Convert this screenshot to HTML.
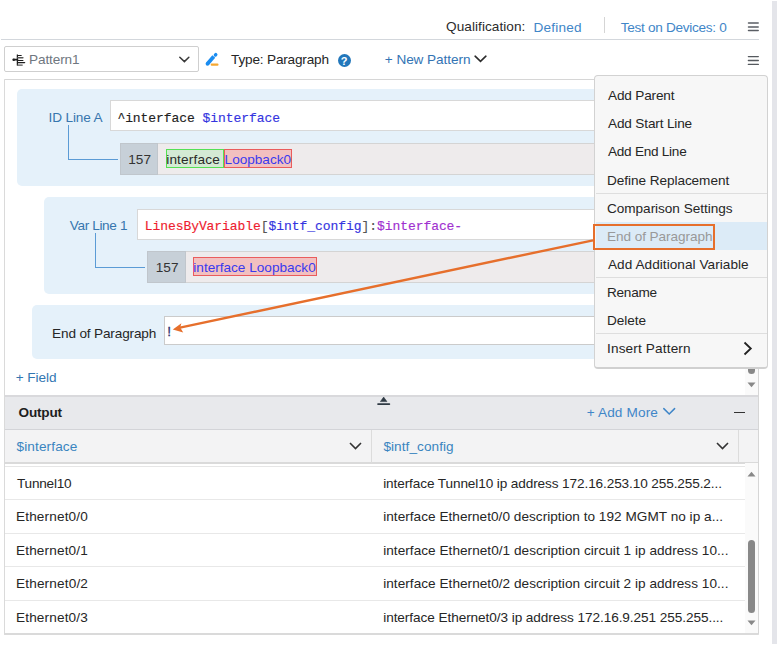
<!DOCTYPE html>
<html><head><meta charset="utf-8">
<style>
*{margin:0;padding:0;box-sizing:border-box}
html,body{width:781px;height:646px;overflow:hidden;background:#fff}
body{position:relative;font-family:"Liberation Sans",sans-serif;font-size:13.6px;color:#262626}
.a{position:absolute}
.t{position:absolute;white-space:nowrap;line-height:16px;font-size:13.6px}
.m{position:absolute;white-space:nowrap;line-height:16px;font-family:"Liberation Mono",monospace;font-size:13px;letter-spacing:-0.06px;-webkit-text-stroke:0.15px currentColor}
</style></head><body>

<!-- right strip -->
<div class="a" style="left:772px;top:1px;width:5px;height:643px;background:#e4e5ea"></div>

<!-- top row -->
<div class="a" style="left:604px;top:17px;width:1px;height:16px;background:#d5d5d5"></div>
<svg class="a" style="left:746px;top:20px" width="15" height="14" viewBox="0 0 15 14"><g stroke="#5a5e64" stroke-width="1.5" stroke-linecap="round"><line x1="2.5" y1="3" x2="12.2" y2="3"/><line x1="2.5" y1="6.9" x2="12.2" y2="6.9"/><line x1="2.5" y1="10.5" x2="12.2" y2="10.5"/></g></svg>
<div class="a" style="left:1px;top:39px;width:758px;height:1px;background:#d3d7dc"></div>

<!-- pattern dropdown -->
<div class="a" style="left:4px;top:46px;width:195px;height:26px;border:1px solid #cfcfcf;border-radius:2px"></div>
<svg class="a" style="left:10px;top:52px" width="18" height="16" viewBox="0 0 18 16">
 <g stroke="#1f1f1f" fill="none" stroke-linecap="round">
  <circle cx="3.7" cy="7.7" r="1.3" fill="#1f1f1f" stroke="none"/>
  <line x1="3.7" y1="7.7" x2="7.4" y2="7.7" stroke-width="1.7"/>
  <line x1="7.4" y1="2.5" x2="7.4" y2="13.5" stroke-width="1.3" stroke-linecap="butt"/>
  <line x1="7.6" y1="3.5" x2="11.2" y2="3.5" stroke-width="1.2"/>
  <line x1="7.6" y1="5.8" x2="12.9" y2="5.8" stroke-width="1.4" stroke="#555"/>
  <line x1="7.6" y1="8.5" x2="12.9" y2="8.5" stroke-width="1.2"/>
  <line x1="7.6" y1="10.6" x2="14.6" y2="10.6" stroke-width="1.4"/>
  <line x1="7.6" y1="13.1" x2="12.2" y2="13.1" stroke-width="1.4" stroke="#555"/>
 </g>
</svg>
<svg class="a" style="left:178px;top:56px" width="12" height="8" viewBox="0 0 12 8"><polyline points="1.8,1.2 6.4,5.65 10.85,1.2" fill="none" stroke="#3a3a3a" stroke-width="1.5" stroke-linecap="round"/></svg>

<!-- pencil -->
<svg class="a" style="left:200px;top:48px" width="24" height="22" viewBox="0 0 24 22">
 <line x1="7.5" y1="15.8" x2="13.8" y2="8.6" stroke="#1a8cf0" stroke-width="3.8" stroke-linecap="butt"/>
 <circle cx="7.5" cy="15.8" r="1.9" fill="#1a8cf0"/>
 <line x1="15.4" y1="7.0" x2="15.8" y2="6.6" stroke="#1a8cf0" stroke-width="3.4" stroke-linecap="round"/>
 <rect x="10.7" y="15.6" width="7.8" height="2.1" rx="1" fill="#f5a833"/>
</svg>
<div class="a" style="left:337.7px;top:54.4px;width:13px;height:13px;border-radius:50%;background:#2277bb"></div>
<div class="t" style="left:337.7px;top:53px;width:13px;text-align:center;color:#fff;font-weight:bold;font-size:11px">?</div>
<svg class="a" style="left:473px;top:55px" width="15" height="9" viewBox="0 0 15 9"><polyline points="2.1,1.2 7.5,6.3 12.9,1.2" fill="none" stroke="#2b2b2b" stroke-width="1.6" stroke-linecap="round"/></svg>
<svg class="a" style="left:746px;top:53px" width="15" height="14" viewBox="0 0 15 14"><g stroke="#55595e" stroke-width="1.4" stroke-linecap="round"><line x1="2.4" y1="3.6" x2="12.3" y2="3.6"/><line x1="2.4" y1="7.5" x2="12.3" y2="7.5"/><line x1="2.4" y1="11.4" x2="12.3" y2="11.4"/></g></svg>

<!-- container -->
<div class="a" style="left:4px;top:78.5px;width:755px;height:556.5px;border:1px solid #d6d6d6;border-left:1.5px solid #dadada;border-bottom:2px solid #dadada;border-radius:1px"></div>

<!-- panel 1 -->
<div class="a" style="left:17px;top:89px;width:728px;height:97px;background:#e5f1fa;border-radius:5px"></div>
<div class="a" style="left:110px;top:100.2px;width:625px;height:31px;background:#fff;border:1px solid #d8d8d8"></div>
<div class="m" style="left:117.4px;top:111px;color:#222">^interface <span style="color:#3434e0">$interface</span></div>
<div class="a" style="left:68px;top:125px;width:1px;height:34px;background:#5b9bd5"></div>
<div class="a" style="left:68px;top:158.5px;width:50px;height:1px;background:#5b9bd5"></div>
<div class="a" style="left:120px;top:143.3px;width:615px;height:31.5px;background:#eeebec;border:1px solid #d4d4d4"></div>
<div class="a" style="left:120px;top:143.3px;width:38px;height:31.5px;background:#c7d0d8;border:1px solid #c0c6cc"></div>
<div class="a" style="left:166px;top:149.2px;width:58px;height:19.2px;background:#d4ead4;border:1.5px solid #55e055"></div>
<div class="a" style="left:224px;top:149.2px;width:68px;height:19.2px;background:#f2c0c0;border:1.5px solid #ea5c5c"></div>

<!-- panel 2 -->
<div class="a" style="left:43.5px;top:197px;width:702px;height:97.3px;background:#e5f1fa;border-radius:5px"></div>
<div class="a" style="left:137.3px;top:208.5px;width:600px;height:31px;background:#fff;border:1px solid #d8d8d8"></div>
<div class="m" style="left:144.7px;top:219px;color:#555"><span style="color:#ee1c2e">LinesByVariable</span>[<span style="color:#3434e0">$intf_config</span>]:<span style="color:#a030d0">$interface-</span></div>
<div class="a" style="left:95.3px;top:233px;width:1px;height:34px;background:#5b9bd5"></div>
<div class="a" style="left:95.3px;top:266.8px;width:50px;height:1px;background:#5b9bd5"></div>
<div class="a" style="left:147.2px;top:251.4px;width:590px;height:31.2px;background:#eeebec;border:1px solid #d4d4d4"></div>
<div class="a" style="left:147.2px;top:251.4px;width:38.4px;height:31.2px;background:#c7d0d8;border:1px solid #c0c6cc"></div>
<div class="a" style="left:192.8px;top:257.2px;width:124px;height:18.8px;background:#f2c0c0;border:1.5px solid #ea5c5c"></div>

<!-- panel 3 -->
<div class="a" style="left:32.3px;top:305.2px;width:713px;height:53.5px;background:#e5f1fa;border-radius:5px"></div>
<div class="a" style="left:164.3px;top:316.3px;width:575px;height:28.6px;background:#fff;border:1px solid #cbcbcb"></div>
<div class="t" style="left:167.3px;top:324px;color:#2e3470;-webkit-text-stroke:0.3px #2e3470">!</div>

<!-- field scrollbar -->
<div class="a" style="left:745px;top:79px;width:13px;height:316px;background:#fafafa"></div>
<div class="a" style="left:747.7px;top:330px;width:7.8px;height:44.2px;background:#888;border-radius:4px"></div>
<svg class="a" style="left:747px;top:381.5px" width="9" height="6" viewBox="0 0 9 6"><polygon points="0.5,0.5 8.5,0.5 4.5,5.2" fill="#888"/></svg>

<!-- output header -->
<div class="a" style="left:5px;top:395px;width:753px;height:35px;background:#e8e9ec;border-top:2px solid #d9d9dc;border-bottom:1px solid #d3d4d8"></div>
<svg class="a" style="left:377px;top:396px" width="14" height="10" viewBox="0 0 14 10"><polygon points="3.4,5.6 6.65,1.1 9.9,5.6" fill="#2f3a44" stroke="#2f3a44" stroke-width="0.6" stroke-linejoin="round"/><rect x="0.2" y="7.3" width="13" height="1.7" rx="0.8" fill="#2f3a44"/></svg>
<svg class="a" style="left:662px;top:407px" width="15" height="9" viewBox="0 0 15 9"><polyline points="1.8,1.6 7.2,7.0 12.6,1.6" fill="none" stroke="#3f86c8" stroke-width="1.5" stroke-linecap="round"/></svg>
<div class="a" style="left:733.5px;top:411.5px;width:11.7px;height:1.8px;background:#333"></div>

<!-- column header -->
<div class="a" style="left:5px;top:430px;width:753px;height:33.7px;background:#f3f3f4;border-bottom:2px solid #dadada"></div>
<div class="a" style="left:371px;top:430px;width:1px;height:33px;background:#dcdcdc"></div>
<div class="a" style="left:738px;top:430px;width:1px;height:33px;background:#dcdcdc"></div>
<svg class="a" style="left:349px;top:442px" width="13" height="8" viewBox="0 0 13 8"><polyline points="1,1 6.5,6.5 12,1" fill="none" stroke="#333" stroke-width="1.6"/></svg>
<svg class="a" style="left:716px;top:442px" width="13" height="8" viewBox="0 0 13 8"><polyline points="1,1 6.5,6.5 12,1" fill="none" stroke="#333" stroke-width="1.6"/></svg>
<div class="a" style="left:5px;top:466px;width:740px;height:1px;background:#e6e6e6"></div>

<!-- data rows -->
<div class="a" style="left:5px;top:499px;width:740px;height:1px;background:#e8e8e8"></div>
<div class="a" style="left:5px;top:532.5px;width:740px;height:1px;background:#e8e8e8"></div>
<div class="a" style="left:5px;top:566px;width:740px;height:1px;background:#e8e8e8"></div>
<div class="a" style="left:5px;top:600px;width:740px;height:1px;background:#e8e8e8"></div>
<div class="a" style="left:745px;top:463px;width:13px;height:170px;background:#fafafa"></div>
<svg class="a" style="left:747px;top:471px" width="9" height="6" viewBox="0 0 9 6"><polygon points="0.5,5.5 8.5,5.5 4.5,0.8" fill="#888"/></svg>
<div class="a" style="left:747.8px;top:540px;width:7.6px;height:72.5px;background:#888;border-radius:4px"></div>
<svg class="a" style="left:747px;top:620px" width="9" height="6" viewBox="0 0 9 6"><polygon points="0.5,0.5 8.5,0.5 4.5,5.2" fill="#888"/></svg>

<div class="t" style="left:446.0px;top:19px;color:#2b2b2b;letter-spacing:0.062px;">Qualification:</div>
<div class="t" style="left:533.5px;top:20px;color:#3f86c8;letter-spacing:0.183px;">Defined</div>
<div class="t" style="left:620.8px;top:20px;color:#3f86c8;letter-spacing:-0.294px;">Test on Devices: 0</div>
<div class="t" style="left:29.0px;top:52px;color:#6f7780;letter-spacing:-0.114px;">Pattern1</div>
<div class="t" style="left:231.1px;top:52px;color:#262626;letter-spacing:-0.186px;">Type: Paragraph</div>
<div class="t" style="left:384.8px;top:52px;color:#3374b4;letter-spacing:-0.067px;">+ New Pattern</div>
<div class="t" style="left:48.5px;top:110px;color:#3776ae;letter-spacing:-0.137px;">ID Line A</div>
<div class="t" style="left:128.2px;top:152px;color:#333;letter-spacing:0.100px;">157</div>
<div class="t" style="left:166.2px;top:152px;color:#2a2a2a;letter-spacing:0.175px;">interface</div>
<div class="t" style="left:224.6px;top:152px;color:#3a3aee;letter-spacing:-0.012px;">Loopback0</div>
<div class="t" style="left:69.8px;top:218px;color:#3776ae;letter-spacing:-0.367px;">Var Line 1</div>
<div class="t" style="left:155.7px;top:260px;color:#333;letter-spacing:0.100px;">157</div>
<div class="t" style="left:193.3px;top:260px;color:#3a3aee;letter-spacing:0.000px;">interface Loopback0</div>
<div class="t" style="left:52.1px;top:326px;color:#262626;letter-spacing:-0.160px;">End of Paragraph</div>
<div class="t" style="left:15.7px;top:370px;color:#3276b2;letter-spacing:-0.067px;">+ Field</div>
<div class="t" style="left:18.6px;top:405px;color:#1e1e1e;letter-spacing:-0.220px;font-weight:bold">Output</div>
<div class="t" style="left:586.7px;top:405px;color:#3f86c8;letter-spacing:0.144px;">+ Add More</div>
<div class="t" style="left:16.5px;top:439px;color:#3a85c0;letter-spacing:0.122px;">$interface</div>
<div class="t" style="left:383.4px;top:439px;color:#3a85c0;letter-spacing:0.064px;">$intf_config</div>
<div class="t" style="left:17.0px;top:476px;color:#262626;letter-spacing:-0.214px;">Tunnel10</div>
<div class="t" style="left:383.2px;top:476px;color:#262626;letter-spacing:-0.107px;">interface Tunnel10 ip address 172.16.253.10 255.255.2...</div>
<div class="t" style="left:16.0px;top:509px;color:#262626;letter-spacing:0.150px;">Ethernet0/0</div>
<div class="t" style="left:383.2px;top:509px;color:#262626;letter-spacing:0.029px;">interface Ethernet0/0 description to 192 MGMT no ip a...</div>
<div class="t" style="left:16.0px;top:543px;color:#262626;letter-spacing:0.150px;">Ethernet0/1</div>
<div class="t" style="left:383.2px;top:543px;color:#262626;letter-spacing:0.037px;">interface Ethernet0/1 description circuit 1 ip address 10...</div>
<div class="t" style="left:16.0px;top:576px;color:#262626;letter-spacing:0.160px;">Ethernet0/2</div>
<div class="t" style="left:383.2px;top:576px;color:#262626;letter-spacing:0.037px;">interface Ethernet0/2 description circuit 2 ip address 10...</div>
<div class="t" style="left:16.0px;top:610px;color:#262626;letter-spacing:0.150px;">Ethernet0/3</div>
<div class="t" style="left:383.2px;top:610px;color:#262626;letter-spacing:-0.066px;">interface Ethernet0/3 ip address 172.16.9.251 255.255....</div>

<!-- menu -->
<div class="a" style="left:594px;top:75px;width:174px;height:293.5px;background:#f7f7f7;border:1.5px solid #d2d2d2;border-bottom:2px solid #d0d0d0;border-radius:4px"></div>
<div class="a" style="left:595.5px;top:193px;width:171.5px;height:1px;background:#dedede"></div>
<div class="a" style="left:595.5px;top:222px;width:171.5px;height:28px;background:#dcebf7"></div>
<div class="a" style="left:595.5px;top:277px;width:171.5px;height:1px;background:#dedede"></div>
<div class="a" style="left:595.5px;top:333px;width:171.5px;height:1px;background:#dedede"></div>
<svg class="a" style="left:743px;top:341px" width="10" height="15" viewBox="0 0 10 15"><polyline points="1.5,1.5 7.8,7.5 1.5,13.5" fill="none" stroke="#222" stroke-width="1.8"/></svg>
<div class="t" style="left:608.0px;top:88px;color:#262626;letter-spacing:-0.167px;">Add Parent</div>
<div class="t" style="left:608.0px;top:116px;color:#262626;letter-spacing:-0.154px;">Add Start Line</div>
<div class="t" style="left:608.0px;top:144px;color:#262626;letter-spacing:-0.264px;">Add End Line</div>
<div class="t" style="left:607.0px;top:173px;color:#262626;letter-spacing:-0.059px;">Define Replacement</div>
<div class="t" style="left:607.0px;top:201px;color:#262626;letter-spacing:-0.039px;">Comparison Settings</div>
<div class="t" style="left:607.0px;top:229px;color:#999;letter-spacing:-0.073px;">End of Paragraph</div>
<div class="t" style="left:608.0px;top:257px;color:#262626;letter-spacing:0.050px;">Add Additional Variable</div>
<div class="t" style="left:607.0px;top:285px;color:#262626;letter-spacing:-0.260px;">Rename</div>
<div class="t" style="left:607.0px;top:313px;color:#262626;letter-spacing:-0.040px;">Delete</div>
<div class="t" style="left:607.0px;top:341px;color:#262626;letter-spacing:0.154px;">Insert Pattern</div>

<!-- orange annotation -->
<div class="a" style="left:592.5px;top:224.3px;width:122px;height:25.6px;border:2px solid #e66f2c"></div>
<svg class="a" style="left:0;top:0" width="781" height="646" viewBox="0 0 781 646">
 <line x1="593" y1="240.3" x2="180" y2="327.6" stroke="#e66f2c" stroke-width="2.4"/>
 <polygon points="172.8,329.4 181.4,323.3 180.2,327.6 183.2,332.4" fill="#e66f2c"/>
</svg>

</body></html>
